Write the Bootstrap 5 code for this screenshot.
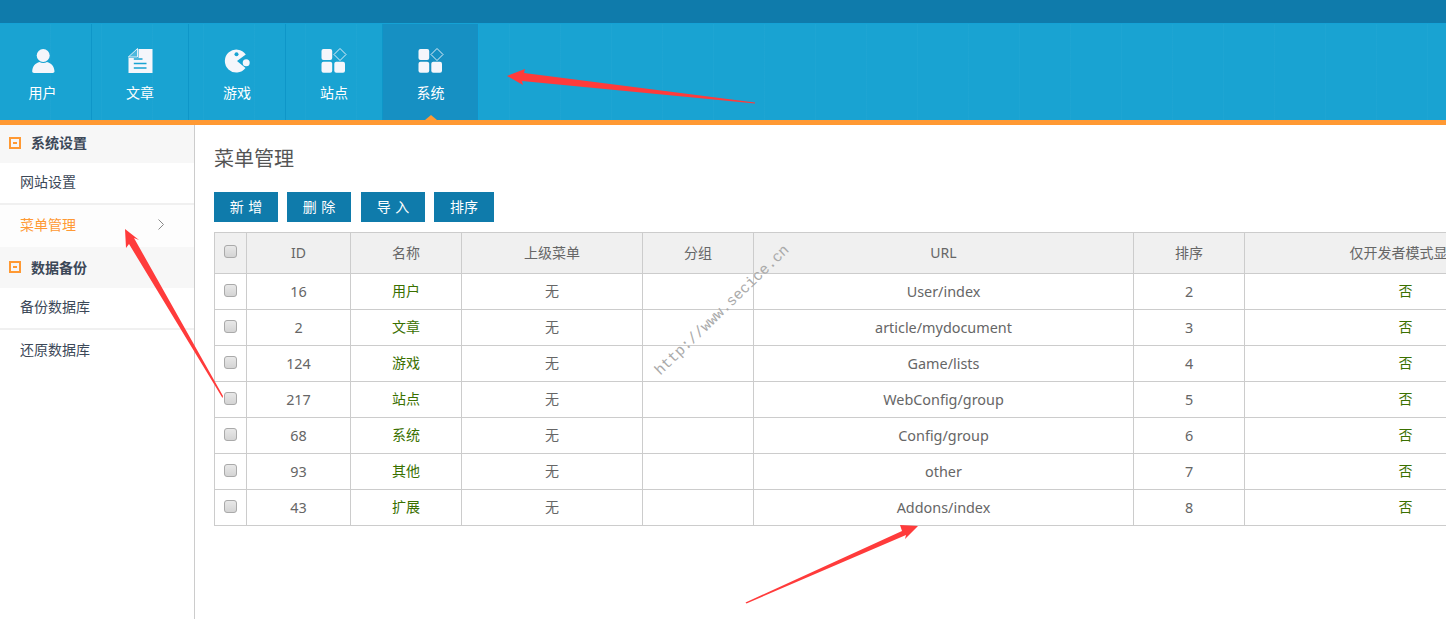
<!DOCTYPE html>
<html lang="zh-CN">
<head>
    <meta charset="UTF-8">
    <meta name="viewport" content="width=device-width, initial-scale=1.0">
    <title>菜单管理</title>
    <link href="https://cdn.jsdelivr.net/npm/bootstrap@5.3.0/dist/css/bootstrap.min.css" rel="stylesheet">
    <style>
        html, body { height: 100%; overflow: hidden; }
        body {
            font-family: "Noto Sans", "Noto Sans CJK SC", sans-serif;
            font-size: 14px;
            color: #666;
            background: #fff;
            position: relative;
        }
        .top-strip { height: 23px; background: #0f7bab; }
        .main-nav {
            height: 97px;
            background-color: #19a3d2;
            border-top: 1px solid #14a2d6;
            overflow: hidden;
            background-image: repeating-linear-gradient(90deg, transparent 0 50px, rgba(255,255,255,.02) 50px 51px);
        }
        .nav-cell {
            width: 97px;
            flex: none;
            color: #fff;
            text-decoration: none;
            border-right: 1px solid #0e96c8;
            position: relative;
            font-size: 14px;
        }
        .nav-cell:first-child { width: 92px; }
        .nav-cell:first-child .nav-inner { margin-left: -6px; width: 97px; }
        .nav-inner { width: 96px; padding-top: 24px; }
        .nav-cell svg { display: block; height: 26px; width: 28px; }
        .nav-label { margin-top: 9px; line-height: 19px; }
        .nav-cell.is-on { width: 96px; background: #1690c3; border-right-color: #12a5da; }
        .nav-cell.is-on .nav-inner { width: 95px; }
        .nav-cell.is-on::after {
            content: "";
            position: absolute;
            left: 42px;
            bottom: 0;
            border: 6px solid transparent;
            border-top: 0;
            border-bottom: 5px solid #ff9933;
        }
        .orange-rule { height: 5px; background: #ff9933; }
        .page-body { height: 494px; }
        .side-panel { width: 195px; flex: none; border-right: 1px solid #ccc; }
        .side-group {
            height: 38px;
            padding: 0 0 3px 9px;
            background: #f7f7f7;
            font-weight: 700;
            font-size: 14px;
            color: #3c4858;
        }
        .side-group.second { height: 41px; padding: 0 0 1px 9px; }
        .box-minus {
            width: 12px;
            height: 12px;
            border: 2px solid #ff9933;
            margin-right: 10px;
            flex: none;
            position: relative;
        }
        .box-minus::after {
            content: "";
            position: absolute;
            left: 2px;
            top: 3px;
            width: 4px;
            height: 2px;
            background: #ff9933;
        }
        .side-link.list-group-item {
            height: 42px;
            padding: 0 30px 3px 20px;
            border: 0;
            border-bottom: 2px solid #f0f0f0;
            border-radius: 0;
            color: #3c4858;
            font-size: 14px;
            background: #fff;
        }
        .side-link.is-current { color: #ff9933; background: #fdfdfd; }
        .content-area { padding: 0 0 0 19px; min-width: 0; flex: 1; overflow: hidden; }
        .page-title { font-size: 20px; font-weight: 400; color: #555; line-height: 28px; margin: 20px 0 19px; }
        .action-row { gap: 9px; margin-bottom: 10px; }
        .act-btn {
            width: 64px;
            height: 30px;
            padding: 0;
            border: 0;
            border-radius: 0;
            background: #0f7bab;
            color: #fff;
            font-size: 14px;
            line-height: 30px;
            word-spacing: 1px;
        }
        .act-btn.wide-gap { margin-left: 1px; }
        .act-btn.narrow { width: 60px; }
        .menu-table {
            table-layout: fixed;
            width: 1352px;
            margin: 0;
            border-color: #ccc;
            color: #666;
        }
        .menu-table > :not(caption) > * > * {
            padding: 0;
            text-align: center;
            vertical-align: middle;
            border-color: #ccc;
            color: #666;
            height: 36px;
            font-size: 14.4px;
            line-height: 20px;
        }
        .menu-table > thead > tr > th {
            height: 41px;
            background: #f0f0f0;
            font-weight: 400;
            font-size: 14px;
        }
        .menu-table > tbody > tr > td.green-cell { color: #3a7000; font-size: 14px; line-height: 18px; padding-bottom: 1px; }
        .menu-table > tbody > tr > td.cn-cell { font-size: 14px; line-height: 18px; padding-bottom: 1px; }
        .col-check { width: 32px; }
        .col-id { width: 104px; }
        .col-name { width: 111px; }
        .col-parent { width: 181px; }
        .col-group { width: 111px; }
        .col-url { width: 380px; }
        .col-sort { width: 111px; }
        .col-dev { width: 322px; }
        .tick {
            appearance: none;
            display: block;
            width: 13px;
            height: 13px;
            margin: -3px auto 0 9px;
            border: 1px solid #aaa;
            border-radius: 3px;
            background: linear-gradient(#e8e8e8, #d4d4d4);
        }
        .water-mark {
            position: absolute;
            left: 623px;
            top: 301px;
            width: 200px;
            text-align: center;
            font-family: "Liberation Mono", monospace;
            font-size: 15px;
            line-height: 20px;
            color: #aaa;
            transform: rotate(-44deg);
            pointer-events: none;
            white-space: nowrap;
        }
        .arrows-layer { position: absolute; left: 0; top: 0; pointer-events: none; }
    </style>
</head>
<body>
    <div class="top-strip"></div>

    <nav class="main-nav d-flex">
        <a class="nav-cell" href="#">
            <div class="nav-inner d-flex flex-column align-items-center">
                <svg viewBox="0 0 28 26"><circle cx="14.200" cy="7.500" r="6.500" fill="#f5f6fb"/><path d="M5 25c-1 0-1.900-.8-1.800-1.700C3.500 18 6.500 15 10.500 14c2 1.300 5.500 1.300 7.500 0 4 1 7.200 4 7.500 9.300.1.900-.8 1.700-1.800 1.700z" fill="#f5f6fb"/></svg>
                <div class="nav-label">用户</div>
            </div>
        </a>
        <a class="nav-cell" href="#">
            <div class="nav-inner d-flex flex-column align-items-center">
                <svg viewBox="0 0 28 26"><path d="M12.500 1h14v24h-24V10h10z" fill="#f5f6fb"/><path d="M11.500 .5v8.500H2.300z" fill="#4db8dd" stroke="#f5f6fb" stroke-width=".9"/><path d="M7.800 11h8.700M7.800 15.500h12.700M7.800 20h12.700" stroke="#19a3d2" stroke-width="1.300"/></svg>
                <div class="nav-label">文章</div>
            </div>
        </a>
        <a class="nav-cell" href="#">
            <div class="nav-inner d-flex flex-column align-items-center">
                <svg viewBox="0 0 28 26"><path d="M22.800 6.500A11.500 11.500 0 1 0 22.500 20L14 13z" fill="#f5f6fb"/><circle cx="13.500" cy="6.200" r="2" fill="#19a3d2"/><circle cx="23.200" cy="14.700" r="3.500" fill="#f5f6fb"/></svg>
                <div class="nav-label">游戏</div>
            </div>
        </a>
        <a class="nav-cell" href="#">
            <div class="nav-inner d-flex flex-column align-items-center">
                <svg viewBox="0 0 28 26"><rect x="1.500" y="1" width="10.700" height="11" rx="2" fill="#f5f6fb"/><rect x="1.500" y="13.700" width="10.700" height="11" rx="2" fill="#f5f6fb"/><rect x="14.300" y="13.700" width="10.700" height="11" rx="2" fill="#f5f6fb"/><path d="M20 .5l6 6-6 6-6-6z" fill="none" stroke="#f5f6fb" stroke-width=".9"/></svg>
                <div class="nav-label">站点</div>
            </div>
        </a>
        <a class="nav-cell is-on" href="#">
            <div class="nav-inner d-flex flex-column align-items-center">
                <svg viewBox="0 0 28 26"><rect x="1.500" y="1" width="10.700" height="11" rx="2" fill="#f5f6fb"/><rect x="1.500" y="13.700" width="10.700" height="11" rx="2" fill="#f5f6fb"/><rect x="14.300" y="13.700" width="10.700" height="11" rx="2" fill="#f5f6fb"/><path d="M20 .5l6 6-6 6-6-6z" fill="none" stroke="#f5f6fb" stroke-width=".9"/></svg>
                <div class="nav-label">系统</div>
            </div>
        </a>
    </nav>
    <div class="orange-rule"></div>

    <div class="page-body d-flex">
        <aside class="side-panel">
            <div class="side-group d-flex align-items-center"><span class="box-minus"></span>系统设置</div>
            <div class="list-group list-group-flush">
                <a class="side-link list-group-item d-flex align-items-center" href="#">网站设置</a>
                <a class="side-link is-current list-group-item d-flex align-items-center justify-content-between" href="#">菜单管理
                    <svg width="6" height="11" viewBox="0 0 6 11"><path d="M.5.5l5 5-5 5" fill="none" stroke="#888" stroke-width="1"/></svg>
                </a>
            </div>
            <div class="side-group second d-flex align-items-center"><span class="box-minus"></span>数据备份</div>
            <div class="list-group list-group-flush">
                <a class="side-link list-group-item d-flex align-items-center" href="#">备份数据库</a>
                <a class="side-link list-group-item d-flex align-items-center" href="#">还原数据库</a>
            </div>
        </aside>

        <main class="content-area">
            <h1 class="page-title">菜单管理</h1>
            <div class="action-row d-flex">
                <button class="btn act-btn">新 增</button>
                <button class="btn act-btn">删 除</button>
                <button class="btn act-btn wide-gap">导 入</button>
                <button class="btn act-btn narrow">排序</button>
            </div>
            <table class="table table-bordered menu-table">
                <colgroup>
                    <col class="col-check"><col class="col-id"><col class="col-name"><col class="col-parent">
                    <col class="col-group"><col class="col-url"><col class="col-sort"><col class="col-dev">
                </colgroup>
                <thead>
                    <tr>
                        <th><input class="tick" type="checkbox"></th>
                        <th>ID</th>
                        <th>名称</th>
                        <th>上级菜单</th>
                        <th>分组</th>
                        <th>URL</th>
                        <th>排序</th>
                        <th>仅开发者模式显示</th>
                    </tr>
                </thead>
                <tbody>
                    <tr><td><input class="tick" type="checkbox"></td><td>16</td><td class="green-cell">用户</td><td class="cn-cell">无</td><td></td><td>User/index</td><td>2</td><td class="green-cell">否</td></tr>
                    <tr><td><input class="tick" type="checkbox"></td><td>2</td><td class="green-cell">文章</td><td class="cn-cell">无</td><td></td><td>article/mydocument</td><td>3</td><td class="green-cell">否</td></tr>
                    <tr><td><input class="tick" type="checkbox"></td><td>124</td><td class="green-cell">游戏</td><td class="cn-cell">无</td><td></td><td>Game/lists</td><td>4</td><td class="green-cell">否</td></tr>
                    <tr><td><input class="tick" type="checkbox"></td><td>217</td><td class="green-cell">站点</td><td class="cn-cell">无</td><td></td><td>WebConfig/group</td><td>5</td><td class="green-cell">否</td></tr>
                    <tr><td><input class="tick" type="checkbox"></td><td>68</td><td class="green-cell">系统</td><td class="cn-cell">无</td><td></td><td>Config/group</td><td>6</td><td class="green-cell">否</td></tr>
                    <tr><td><input class="tick" type="checkbox"></td><td>93</td><td class="green-cell">其他</td><td class="cn-cell">无</td><td></td><td>other</td><td>7</td><td class="green-cell">否</td></tr>
                    <tr><td><input class="tick" type="checkbox"></td><td>43</td><td class="green-cell">扩展</td><td class="cn-cell">无</td><td></td><td>Addons/index</td><td>8</td><td class="green-cell">否</td></tr>
                </tbody>
            </table>
        </main>
    </div>

    <div class="water-mark">http://www.secice.cn</div>

    <svg class="arrows-layer" width="1446" height="619" viewBox="0 0 1446 619">
        <polygon points="507,76 525,69 524,73 755,102.500 755,103.500 522,81 523,85" fill="#ff3b3b"/>
        <polygon points="125,229 139,240 134,238 223,396 222.500,398 129,244 126,248" fill="#ff3b3b"/>
        <polygon points="745.500,602.500 902,531 900,525 918,526 905,539 906,535 746.500,603.500" fill="#ff3b3b"/>
    </svg>

    <script src="https://cdn.jsdelivr.net/npm/bootstrap@5.3.0/dist/js/bootstrap.bundle.min.js"></script>
</body>
</html>
